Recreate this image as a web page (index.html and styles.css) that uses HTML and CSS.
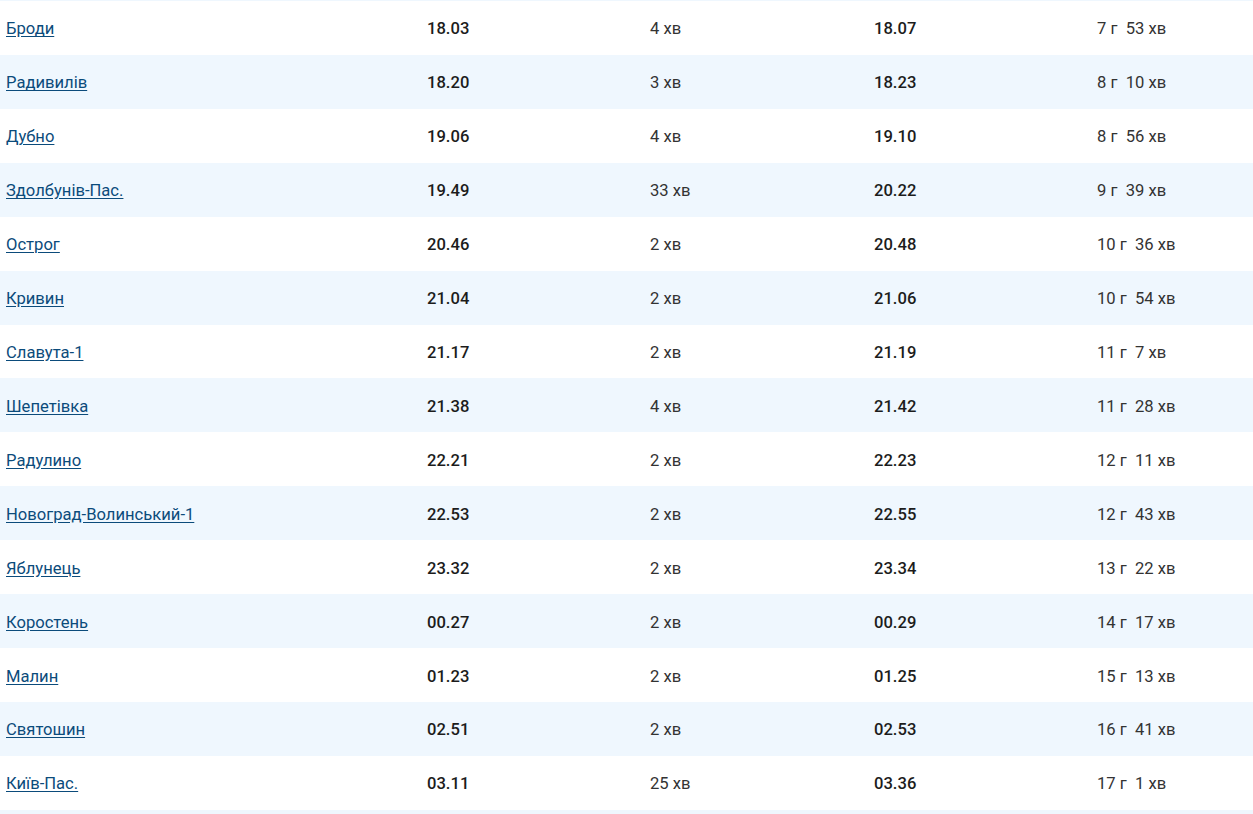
FILE: index.html
```html
<!DOCTYPE html>
<html lang="uk">
<head>
<meta charset="utf-8">
<link rel="stylesheet" href="styles.css">
</head>
<body>
<div class="top-strip"></div>
<table class="route">
  <colgroup>
    <col class="c-name"><col class="c-t"><col class="c-w"><col class="c-t"><col>
  </colgroup>
  <tbody>
    <tr><td><a href="#">Броди</a></td><td class="time">18.03</td><td class="stop">4 хв</td><td class="time">18.07</td><td class="stop">7 г&nbsp; 53 хв</td></tr>
    <tr><td><a href="#">Радивилів</a></td><td class="time">18.20</td><td class="stop">3 хв</td><td class="time">18.23</td><td class="stop">8 г&nbsp; 10 хв</td></tr>
    <tr><td><a href="#">Дубно</a></td><td class="time">19.06</td><td class="stop">4 хв</td><td class="time">19.10</td><td class="stop">8 г&nbsp; 56 хв</td></tr>
    <tr><td><a href="#">Здолбунів-Пас.</a></td><td class="time">19.49</td><td class="stop">33 хв</td><td class="time">20.22</td><td class="stop">9 г&nbsp; 39 хв</td></tr>
    <tr><td><a href="#">Острог</a></td><td class="time">20.46</td><td class="stop">2 хв</td><td class="time">20.48</td><td class="stop">10 г&nbsp; 36 хв</td></tr>
    <tr><td><a href="#">Кривин</a></td><td class="time">21.04</td><td class="stop">2 хв</td><td class="time">21.06</td><td class="stop">10 г&nbsp; 54 хв</td></tr>
    <tr><td><a href="#">Славута-1</a></td><td class="time">21.17</td><td class="stop">2 хв</td><td class="time">21.19</td><td class="stop">11 г&nbsp; 7 хв</td></tr>
    <tr><td><a href="#">Шепетівка</a></td><td class="time">21.38</td><td class="stop">4 хв</td><td class="time">21.42</td><td class="stop">11 г&nbsp; 28 хв</td></tr>
    <tr><td><a href="#">Радулино</a></td><td class="time">22.21</td><td class="stop">2 хв</td><td class="time">22.23</td><td class="stop">12 г&nbsp; 11 хв</td></tr>
    <tr><td><a href="#">Новоград-Волинський-1</a></td><td class="time">22.53</td><td class="stop">2 хв</td><td class="time">22.55</td><td class="stop">12 г&nbsp; 43 хв</td></tr>
    <tr><td><a href="#">Яблунець</a></td><td class="time">23.32</td><td class="stop">2 хв</td><td class="time">23.34</td><td class="stop">13 г&nbsp; 22 хв</td></tr>
    <tr><td><a href="#">Коростень</a></td><td class="time">00.27</td><td class="stop">2 хв</td><td class="time">00.29</td><td class="stop">14 г&nbsp; 17 хв</td></tr>
    <tr><td><a href="#">Малин</a></td><td class="time">01.23</td><td class="stop">2 хв</td><td class="time">01.25</td><td class="stop">15 г&nbsp; 13 хв</td></tr>
    <tr><td><a href="#">Святошин</a></td><td class="time">02.51</td><td class="stop">2 хв</td><td class="time">02.53</td><td class="stop">16 г&nbsp; 41 хв</td></tr>
    <tr><td><a href="#">Київ-Пас.</a></td><td class="time">03.11</td><td class="stop">25 хв</td><td class="time">03.36</td><td class="stop">17 г&nbsp; 1 хв</td></tr>
    <tr><td></td><td></td><td></td><td></td><td></td></tr>
  </tbody>
</table>
</body>
</html>
```
FILE: styles.css
```css
html, body {
  margin: 0;
  padding: 0;
  background: #fff;
  overflow: hidden;
}
body {
  font-family: Roboto, "Liberation Sans", Arial, sans-serif;
  font-size: 16.6px;
  color: #222;
}
.top-strip {
  height: 1px;
  background: #eff7fe;
}
.route {
  width: 1253px;
  border-collapse: collapse;
  table-layout: fixed;
}
.c-name { width: 421px; }
.c-t { width: 223px; }
.c-w { width: 224px; }
.route td {
  height: 53.93px;
  padding: 2px 6px 0;
  vertical-align: middle;
  box-sizing: border-box;
  white-space: nowrap;
}
.route tr:nth-child(even) td {
  background: #eff7fe;
}
.route a {
  color: #0b4b7b;
  text-decoration: underline;
  text-underline-offset: 2px;
}
.time {
  font-weight: 500;
  color: #1c1c1c;
}
.stop {
  color: #333;
}
```
